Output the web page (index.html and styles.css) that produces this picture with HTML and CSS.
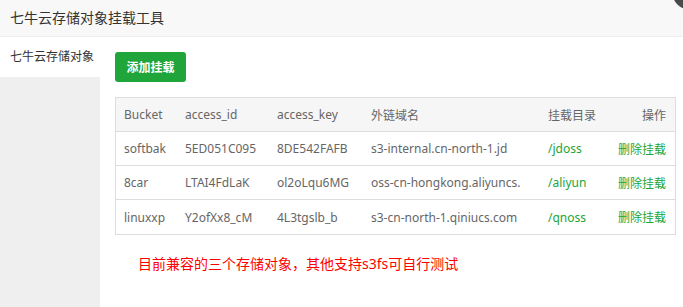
FILE: index.html
```html
<!DOCTYPE html>
<html lang="zh-CN">
<head>
    <meta charset="UTF-8">
    <title>七牛云存储对象挂载工具</title>
    <link rel="stylesheet" href="styles.css">
</head>
<body>
    <div class="layer">
        <div class="layer-title">七牛云存储对象挂载工具</div>
        <span class="layer-close"></span>
        <div class="layer-body">
            <ul class="side-menu">
                <li class="active">七牛云存储对象</li>
            </ul>
            <div class="main">
                <button class="btn-success">添加挂载</button>
                <table class="mount-table">
                    <colgroup>
                        <col style="width: 61px">
                        <col style="width: 92px">
                        <col style="width: 94px">
                        <col style="width: 177px">
                        <col style="width: 70px">
                        <col>
                    </colgroup>
                    <thead>
                        <tr>
                            <th>Bucket</th>
                            <th>access_id</th>
                            <th>access_key</th>
                            <th>外链域名</th>
                            <th>挂载目录</th>
                            <th class="text-right">操作</th>
                        </tr>
                    </thead>
                    <tbody>
                        <tr>
                            <td>softbak</td>
                            <td>5ED051C095</td>
                            <td>8DE542FAFB</td>
                            <td>s3-internal.cn-north-1.jd</td>
                            <td class="btlink">/jdoss</td>
                            <td class="text-right"><a class="btlink" href="#">删除挂载</a></td>
                        </tr>
                        <tr>
                            <td>8car</td>
                            <td>LTAI4FdLaK</td>
                            <td>ol2oLqu6MG</td>
                            <td>oss-cn-hongkong.aliyuncs.</td>
                            <td class="btlink">/aliyun</td>
                            <td class="text-right"><a class="btlink" href="#">删除挂载</a></td>
                        </tr>
                        <tr>
                            <td>linuxxp</td>
                            <td>Y2ofXx8_cM</td>
                            <td>4L3tgslb_b</td>
                            <td>s3-cn-north-1.qiniucs.com</td>
                            <td class="btlink">/qnoss</td>
                            <td class="text-right"><a class="btlink" href="#">删除挂载</a></td>
                        </tr>
                    </tbody>
                </table>
                <p class="tips">目前兼容的三个存储对象，其他支持s3fs可自行测试</p>
            </div>
        </div>
    </div>
</body>
</html>
```

FILE: styles.css
```css
/* General Reset */
* {
    margin: 0;
    padding: 0;
    box-sizing: border-box;
}
html, body {
    height: 100%;
    overflow: hidden;
}
body {
    font-family: "Noto Sans", "Noto Sans CJK SC", sans-serif;
    font-size: 12px;
    color: #333;
    background: #fff;
}
.layer {
    position: relative;
    height: 100%;
    display: flex;
    flex-direction: column;
}
.layer-title {
    height: 37px;
    line-height: 35px;
    padding-left: 10px;
    font-size: 14px;
    color: #333;
    background: #f8f8f8;
    border-bottom: 1px solid #eee;
}
.layer-close {
    position: absolute;
    top: -21px;
    right: -20px;
    width: 30px;
    height: 30px;
    border-radius: 50%;
    background: #4a4a4a;
}
.layer-body {
    flex: 1;
    display: flex;
}
.side-menu {
    width: 100px;
    list-style: none;
    background: #efefef;
}
.side-menu li {
    height: 40px;
    line-height: 40px;
    padding-left: 10px;
    color: #333;
}
.side-menu li.active {
    background: #fff;
}
.main {
    flex: 1;
    padding: 15px 7px 0 15px;
}
.btn-success {
    width: 71px;
    height: 30px;
    border: none;
    border-radius: 3px;
    background: #20a53a;
    color: #fff;
    font-family: inherit;
    font-size: 12px;
    font-weight: bold;
}
.mount-table {
    width: 100%;
    margin-top: 15px;
    table-layout: fixed;
    border-collapse: separate;
    border-spacing: 0;
    border: 1px solid #ddd;
    color: #666;
}
.mount-table th,
.mount-table td {
    height: 34px;
    padding: 0 9px 0 8px;
    text-align: left;
    font-weight: normal;
    white-space: nowrap;
    overflow: hidden;
    border-bottom: 1px solid #ddd;
}
.mount-table th {
    background: #f6f6f6;
}
.mount-table tbody tr:last-child td {
    border-bottom: none;
}
.mount-table .text-right {
    text-align: right;
}
.btlink {
    color: #20a53a;
    text-decoration: none;
}
.tips {
    margin-top: 19px;
    padding-left: 23px;
    font-size: 14px;
    line-height: 20px;
    color: #f00;
}
```
